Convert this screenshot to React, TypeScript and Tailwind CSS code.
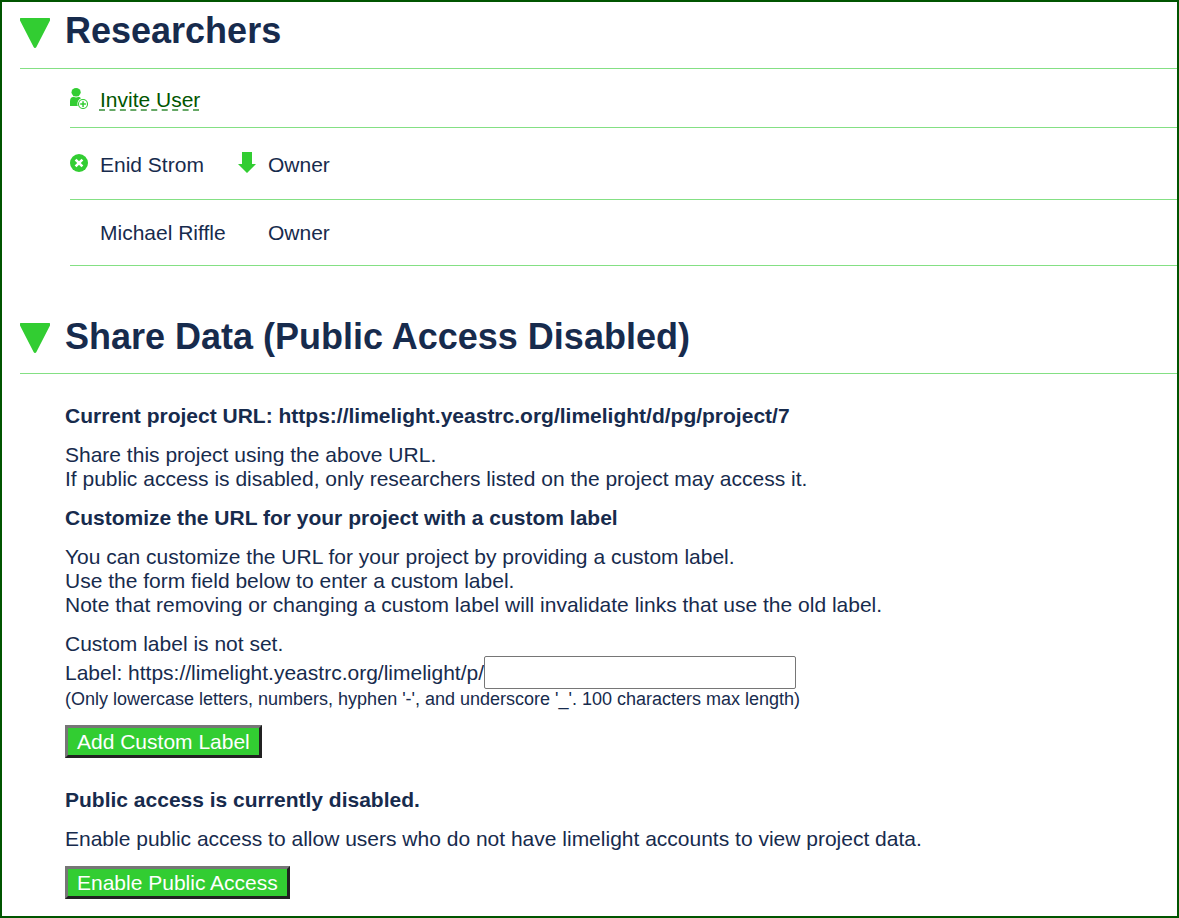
import type { ReactNode } from "react";

function SectionHeader({ children, titleClass }: { children: ReactNode; titleClass: string }) {
  return (
    <div className="flex h-[61px] items-start border-b border-[#84e084]">
      <svg width="30" height="30" viewBox="0 0 30 30" className="mt-[10px] shrink-0" fill="#32cd32">
        <path d="M0.6 0H29.4Q30 0 30 0.6V2.6L16.4 28.9Q15.9 30 15 30Q14.1 30 13.6 28.9L0 2.6V0.6Q0 0 0.6 0Z" />
      </svg>
      <h2 className={`ml-[15px] text-[36px] leading-[42px] font-bold whitespace-nowrap ${titleClass}`}>{children}</h2>
    </div>
  );
}

function InviteIcon() {
  return (
    <svg width="18" height="21" viewBox="0 0 18 21" fill="#32cd32">
      <ellipse cx="6.1" cy="4.2" rx="4.6" ry="4.2" />
      <path d="M0 18V13.5Q0 9 3.6 8.7Q6.2 10.2 8.6 8.7Q10 8.8 11 10.2Q7.4 12 7.4 16Q7.4 17.2 7.8 18Z" />
      <circle cx="13" cy="16" r="4.5" fill="white" stroke="#32cd32" strokeWidth="1.1" />
      <path d="M12.3 13.2h1.5v2.1h2.1v1.5h-2.1v2.1h-1.5v-2.1h-2.1v-1.5h2.1z" />
    </svg>
  );
}

function RemoveIcon() {
  return (
    <svg width="18" height="18" viewBox="0 0 18 18">
      <circle cx="9" cy="9" r="9" fill="#32cd32" />
      <path d="M5.6 5.6L12.4 12.4M12.4 5.6L5.6 12.4" stroke="white" strokeWidth="2.6" />
    </svg>
  );
}

function DownIcon() {
  return (
    <svg width="18" height="21" viewBox="0 0 18 21" fill="#32cd32">
      <path d="M4 0H14V12H18L9 21L0 12H4Z" />
    </svg>
  );
}

function ActionButton({ children }: { children: ReactNode }) {
  return (
    <button className="block h-[33px] border-[3px] border-t-[#767676] border-r-[#212121] border-b-[#212121] border-l-[#767676] bg-[#32cd32] px-[9px] leading-[24px] whitespace-nowrap text-white">
      {children}
    </button>
  );
}

export default function App() {
  return (
    <main className="h-[918px] w-[1179px] overflow-hidden border-2 border-[#005500] bg-white pt-[6px] pl-[18px] font-['Liberation_Sans',Arial,sans-serif] text-[21px] leading-[24px] text-[#172b4d]">
      <section>
        <SectionHeader titleClass="pt-[2px]">Researchers</SectionHeader>
        <div className="ml-[50px]">
          <div className="flex h-[59px] border-b border-[#84e084]">
            <div className="w-[30px] pt-[19px]"><InviteIcon /></div>
            <a className="mt-[19px] flex h-[24px] text-[#005500]">
              <span className="relative">
                Invite User
                <svg width="100" height="2" className="absolute top-[21px] -left-px">
                  <path d="M0 1H101" stroke="#66a866" strokeWidth="2" strokeDasharray="6 4.45" />
                </svg>
              </span>
            </a>
          </div>
          <div className="flex h-[72px] border-b border-[#84e084]">
            <div className="w-[30px] pt-[26px]"><RemoveIcon /></div>
            <div className="w-[138px] pt-[25px]">Enid Strom</div>
            <div className="w-[30px] pt-[24px]"><DownIcon /></div>
            <div className="pt-[25px]">Owner</div>
          </div>
          <div className="flex h-[66px] border-b border-[#84e084] pt-[21px] pl-[30px]">
            <div className="w-[168px]">Michael Riffle</div>
            <div>Owner</div>
          </div>
        </div>
      </section>

      <section className="mt-[47px]">
        <SectionHeader titleClass="pt-[3px]">Share Data (Public Access Disabled)</SectionHeader>
        <div className="mt-[30px] ml-[45px] whitespace-nowrap">
          <p className="font-bold">Current project URL: https://limelight.yeastrc.org/limelight/d/pg/project/7</p>
          <p className="mt-[15px]">
            Share this project using the above URL.
            <br />
            If public access is disabled, only researchers listed on the project may access it.
          </p>
          <p className="mt-[15px] font-bold">Customize the URL for your project with a custom label</p>
          <p className="mt-[15px]">
            You can customize the URL for your project by providing a custom label.
            <br />
            Use the form field below to enter a custom label.
            <br />
            Note that removing or changing a custom label will invalidate links that use the old label.
          </p>
          <p className="mt-[15px]">Custom label is not set.</p>
          <div className="flex h-[33px] items-center">
            <label htmlFor="custom-label">Label: https://limelight.yeastrc.org/limelight/p/</label>
            <input id="custom-label" maxLength={100} className="h-[33px] w-[312px] rounded-[2px] border border-[#767676] px-[3px] outline-none" />
          </div>
          <p className="text-[18px] leading-[21px]">
            (Only lowercase letters, numbers, hyphen '-', and underscore '_'. 100 characters max length)
          </p>
          <div className="mt-[15px]"><ActionButton>Add Custom Label</ActionButton></div>
          <p className="mt-[30px] font-bold">Public access is currently disabled.</p>
          <p className="mt-[15px]">
            Enable public access to allow users who do not have limelight accounts to view project data.
          </p>
          <div className="mt-[15px]"><ActionButton>Enable Public Access</ActionButton></div>
        </div>
      </section>
    </main>
  );
}
